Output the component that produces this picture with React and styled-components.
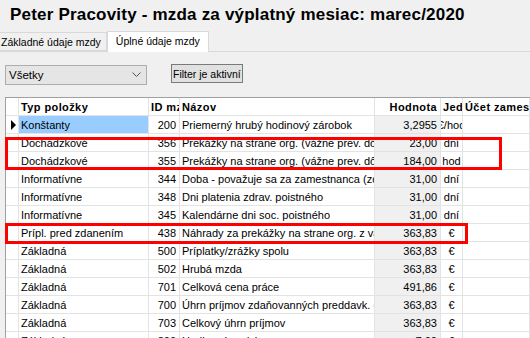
import React from 'react';
import styled, { createGlobalStyle } from 'styled-components';

const GlobalStyle = createGlobalStyle`
  html, body {
    margin: 0;
    padding: 0;
    background: #f0f0f0;
    overflow: hidden;
  }
  body {
    font-family: 'Liberation Sans', Arial, sans-serif;
    font-size: 11px;
    color: #000;
  }
`;

const Page = styled.div`
  position: relative;
  width: 530px;
  height: 338px;
  overflow: hidden;
  background: #f0f0f0;
`;

const Title = styled.h1`
  margin: 0;
  padding: 5px 0 0 10px;
  height: 26px;
  box-sizing: border-box;
  font-family: 'Liberation Sans', Arial, sans-serif;
  font-size: 17px;
  font-weight: bold;
  letter-spacing: 0.2px;
  color: #000;
  white-space: nowrap;
`;

const TabBar = styled.div`
  display: flex;
  align-items: flex-end;
  height: 26px;
  border-bottom: 1px solid #d9d9d9;
  box-sizing: border-box;
`;

const Tab = styled.div`
  height: ${(p) => (p.active ? '21px' : '19px')};
  margin-bottom: ${(p) => (p.active ? '-1px' : '0')};
  padding: ${(p) => (p.active ? '3px 8px 0 8px' : '3px 5px 0 1px')};
  box-sizing: border-box;
  background: ${(p) => (p.active ? '#fff' : '#f0f0f0')};
  border: 1px solid #d9d9d9;
  border-bottom: ${(p) => (p.active ? 'none' : '1px solid #d9d9d9')};
  border-left: ${(p) => (p.first ? 'none' : '1px solid #d9d9d9')};
  font-size: 10.5px;
  white-space: nowrap;
`;

const Toolbar = styled.div`
  display: flex;
  align-items: center;
  gap: 24px;
  padding: 0 0 0 5px;
  height: 45px;
  box-sizing: border-box;
`;

const Combo = styled.div`
  display: flex;
  align-items: center;
  justify-content: space-between;
  width: 142px;
  height: 20px;
  box-sizing: border-box;
  padding: 0 5px 0 3px;
  background: #e5e5e5;
  border: 1px solid #adadad;
  font-size: 11.5px;
`;

const Button = styled.div`
  display: flex;
  align-items: center;
  height: 19px;
  margin-top: -2px;
  box-sizing: border-box;
  padding: 0 1px;
  background: #e1e1e1;
  border: 1px solid #7a7a7a;
  font-size: 10.5px;
  white-space: nowrap;
`;

const Grid = styled.div`
  margin-left: 5px;
  border-top: 1px solid #a0a0a0;
  border-left: 1px solid #a0a0a0;
  background: #fff;
  height: 241px;
  overflow: hidden;
`;

const Row = styled.div`
  display: grid;
  grid-template-columns: 13px 130px 31px 195px 66px 22px 1fr;
  height: 18px;
  border-bottom: 1px solid #e3e3e3;
  box-sizing: border-box;
`;

const Cell = styled.div`
  position: relative;
  display: flex;
  align-items: center;
  justify-content: ${(p) => (p.align === 'right' ? 'flex-end' : p.align === 'center' ? 'center' : 'flex-start')};
  padding: ${(p) => (p.align === 'right' ? '0 3px 0 0' : p.align === 'center' ? '0' : '0 0 0 2px')};
  border-right: 1px solid #e3e3e3;
  background: ${(p) => p.bg || 'transparent'};
  font-weight: ${(p) => (p.head ? 'bold' : 'normal')};
  letter-spacing: ${(p) => (p.head ? '0.4px' : '0')};
  white-space: nowrap;
  overflow: hidden;
  min-width: 0;
`;

const Arrow = styled.div`
  width: 0;
  height: 0;
  margin-left: 3px;
  border-top: 5px solid transparent;
  border-bottom: 5px solid transparent;
  border-left: 5px solid #000;
`;

const Mark = styled.div`
  position: absolute;
  border: 3px solid #f00;
  box-sizing: border-box;
  pointer-events: none;
`;

const rows = [
  ['Konštanty', '200', 'Priemerný hrubý hodinový zárobok', '3,2955', '€/hod'],
  ['Dochádzkové', '356', 'Prekážky na strane org. (vážne prev. dôvody)', '23,00', 'dní'],
  ['Dochádzkové', '355', 'Prekážky na strane org. (vážne prev. dôvody)', '184,00', 'hod'],
  ['Informatívne', '344', 'Doba - považuje sa za zamestnanca (zdrav.)', '31,00', 'dní'],
  ['Informatívne', '348', 'Dni platenia zdrav. poistného', '31,00', 'dní'],
  ['Informatívne', '345', 'Kalendárne dni soc. poistného', '31,00', 'dní'],
  ['Prípl. pred zdanením', '438', 'Náhrady za prekážky na strane org. z vážnych', '363,83', '€'],
  ['Základná', '500', 'Príplatky/zrážky spolu', '363,83', '€'],
  ['Základná', '502', 'Hrubá mzda', '363,83', '€'],
  ['Základná', '701', 'Celková cena práce', '491,86', '€'],
  ['Základná', '700', 'Úhrn príjmov zdaňovanných preddavk. časť', '363,83', '€'],
  ['Základná', '703', 'Celkový úhrn príjmov', '363,83', '€'],
  ['Základná', '800', 'Hodinová sadzba', '7,00', '€'],
];

const Chevron = () => (
  <svg width="9" height="6" viewBox="0 0 9 6">
    <path d="M0.5 0.5 L4.5 4.5 L8.5 0.5" fill="none" stroke="#555" strokeWidth="1" />
  </svg>
);

const App = () => (
  <Page>
    <GlobalStyle />
    <Title>Peter Pracovity - mzda za výplatný mesiac: marec/2020</Title>
    <TabBar>
      <Tab first>Základné údaje mzdy</Tab>
      <Tab active>Úplné údaje mzdy</Tab>
    </TabBar>
    <Toolbar>
      <Combo>
        <span>Všetky</span>
        <Chevron />
      </Combo>
      <Button>Filter je aktivní</Button>
    </Toolbar>
    <Grid>
      <Row>
        <Cell />
        <Cell head>Typ položky</Cell>
        <Cell head>ID mzdy</Cell>
        <Cell head>Názov</Cell>
        <Cell head align="right">Hodnota</Cell>
        <Cell head>Jednotka</Cell>
        <Cell head>Účet zamestnanca</Cell>
      </Row>
      {rows.map((r, i) => (
        <Row key={i}>
          <Cell>{i === 0 && <Arrow />}</Cell>
          <Cell bg={i === 0 ? '#99ccff' : undefined}>{r[0]}</Cell>
          <Cell align="right">{r[1]}</Cell>
          <Cell>{r[2]}</Cell>
          <Cell align="right" bg="#f0f0f0">{r[3]}</Cell>
          <Cell align="center">{r[4]}</Cell>
          <Cell />
        </Row>
      ))}
    </Grid>
    <Mark style={{ left: 5, top: 137, width: 497, height: 33 }} />
    <Mark style={{ left: 5, top: 223, width: 463, height: 21 }} />
  </Page>
);

export default App;
